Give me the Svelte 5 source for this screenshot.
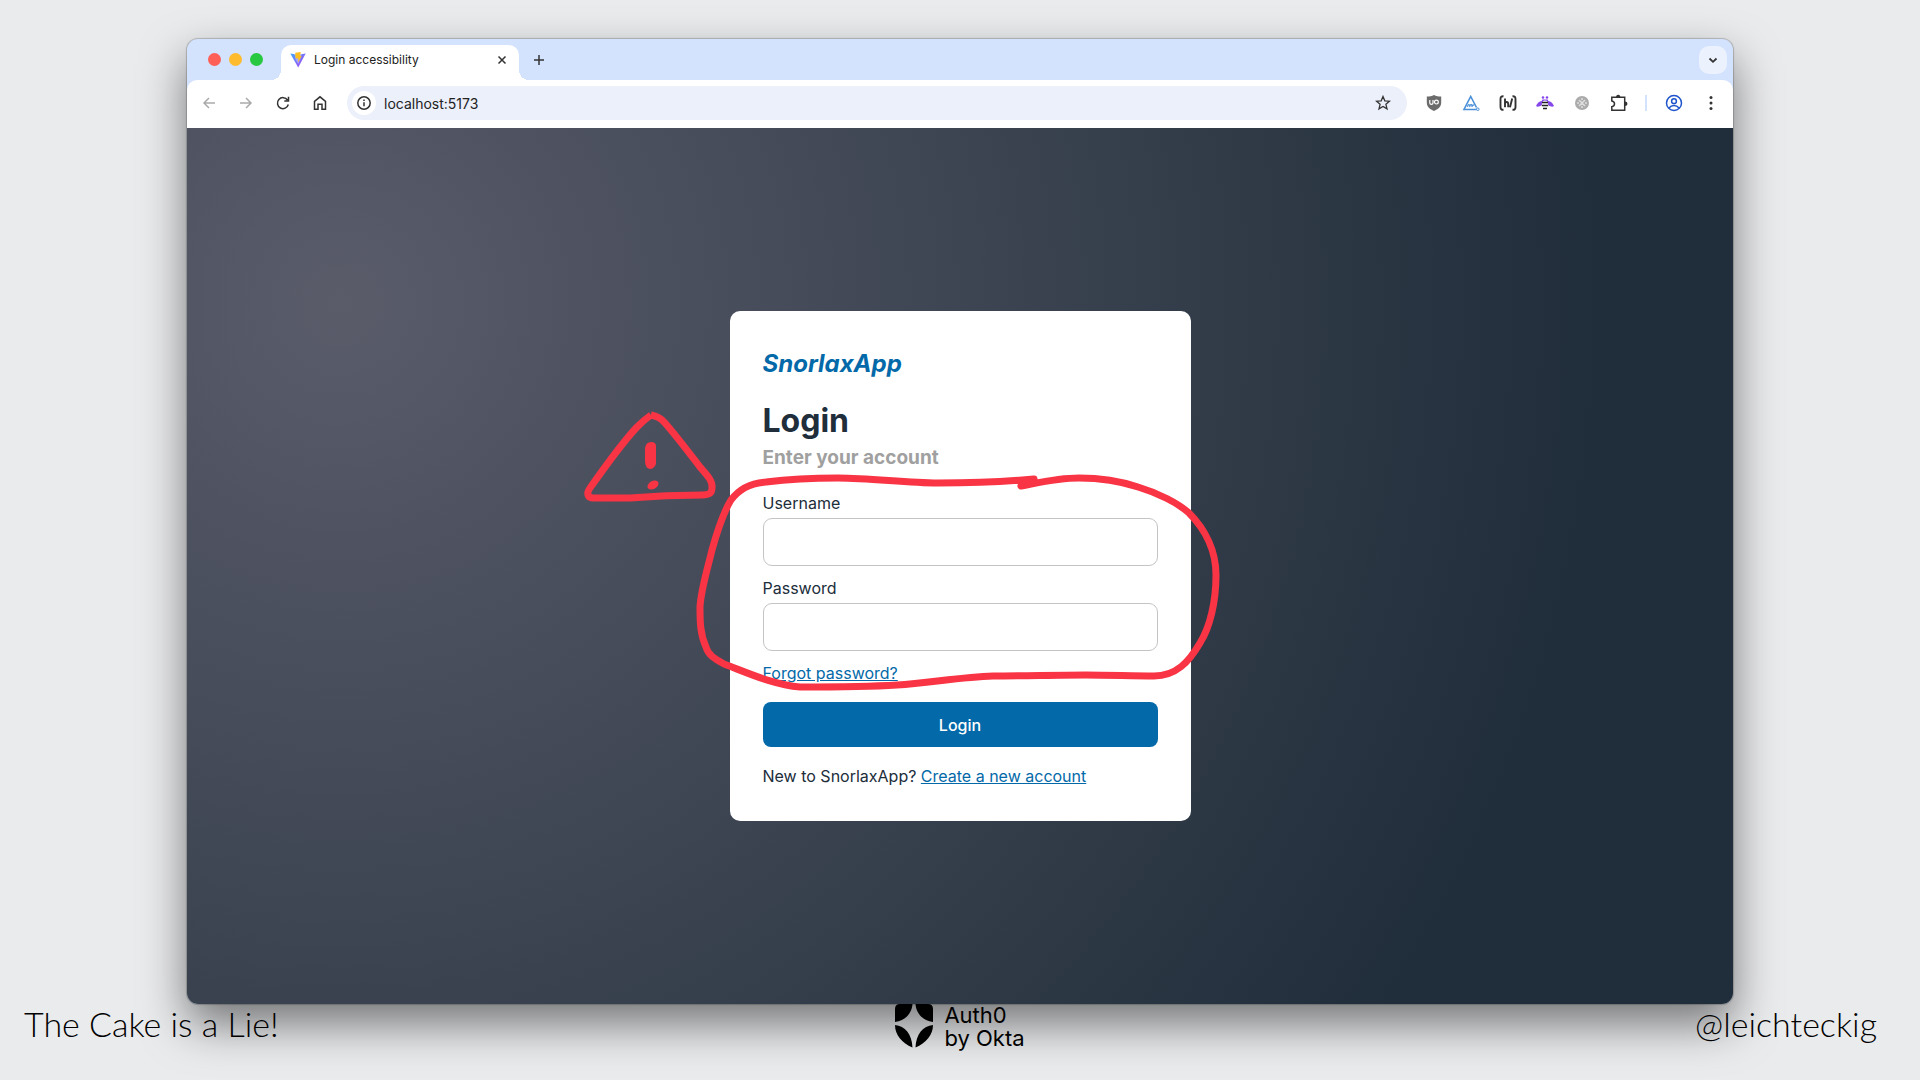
<script>
    let username = $state('');
    let password = $state('');
    const login = e => e.preventDefault();
</script>

<svelte:head>
    <title>Login accessibility</title>
</svelte:head>

<div class="slide">
    <main class="browser">
        <div class="tabs">
            <div class="lights">
                <span class="light red"></span>
                <span class="light yellow"></span>
                <span class="light green"></span>
            </div>
            <div class="tab">
                <svg class="favicon" viewBox="0 0 16 16" width="16" height="16" aria-hidden="true">
                    <defs>
                        <linearGradient id="bolt" x1="0" y1="0" x2="1" y2="1">
                            <stop offset="0" stop-color="#41a8ff" />
                            <stop offset="1" stop-color="#b03df5" />
                        </linearGradient>
                    </defs>
                    <path fill="url(#bolt)" d="M.3 1.400 8 2.800l7.700-1.400L8.200 15.500z" />
                    <path fill="#fff" d="m4.400 1.900 7.200-.6-1 5.200L8.200 12 5.800 8z" opacity=".35" />
                    <path fill="#fdbf22" d="m5.200.8 5.600-.8-.7 4 1.700-.2-3.700 6.700.2-4.200-2.700.3z" />
                </svg>
                <span class="title">Login accessibility</span>
                <button class="icon small" aria-label="Close tab">
                    <svg viewBox="0 0 10 10" width="10" height="10"><path d="m1.500 1.500 7 7m0-7-7 7" /></svg>
                </button>
            </div>
            <button class="icon small" aria-label="New tab">
                <svg viewBox="0 0 12 12" width="12" height="12"><path d="M6 1v10M1 6h10" /></svg>
            </button>
            <button class="icon search" aria-label="Search tabs">
                <svg viewBox="0 0 10 10" width="10" height="10"><path d="m1.500 3.500 3.500 3.300 3.500-3.300" stroke-width="1.800" /></svg>
            </button>
        </div>

        <div class="toolbar">
            <button class="icon faded" aria-label="Back">
                <svg viewBox="0 0 16 16" width="16" height="16"><path d="M14 8H3m5-5L3 8l5 5" /></svg>
            </button>
            <button class="icon faded" aria-label="Forward">
                <svg viewBox="0 0 16 16" width="16" height="16"><path d="M2 8h11M8 3l5 5-5 5" /></svg>
            </button>
            <button class="icon" aria-label="Reload">
                <svg viewBox="0 0 16 16" width="16" height="16"><path d="M13.300 9.500A5.500 5.500 0 1 1 12.500 5M13.500 1.800V6H9.300" /></svg>
            </button>
            <button class="icon" aria-label="Home">
                <svg viewBox="0 0 16 16" width="16" height="16"><path d="M2.500 14.300V6.400L8 1.800l5.500 4.600v7.900H10V9.200H6v5.100z" /></svg>
            </button>
            <div class="address">
                <span class="info">
                    <svg viewBox="0 0 16 16" width="16" height="16" aria-hidden="true"><circle cx="8" cy="8" r="6.200" /><path d="M8 7.300v4M8 4.500v1.400" /></svg>
                </span>
                <input aria-label="Address" value="localhost:5173" />
                <button class="icon" aria-label="Bookmark">
                    <svg viewBox="0 0 16 16" width="16" height="16"><path stroke-width="1.300" d="m8 1.500 1.800 4.300 4.700.4-3.600 3.100 1.100 4.600L8 11.500l-4 2.400 1.100-4.600-3.600-3.100 4.700-.4z" /></svg>
                </button>
            </div>
            <button class="icon" aria-label="uBlock">
                <svg viewBox="0 0 16 16" width="16" height="16">
                    <path fill="#6b6b6b" stroke="none" d="M8 0c2 1.200 4.500 1.600 7.200 1.600v6C15.200 12 12 14.500 8 16 4 14.500.8 12 .8 7.600v-6C3.500 1.600 6 1.200 8 0z" />
                    <path stroke="#fff" stroke-width="1.200" d="M3.800 5v3q0 1.300 1.600 1.300T7 8V5" /><circle cx="10.400" cy="7.100" r="1.900" stroke="#fff" stroke-width="1.200" />
                </svg>
            </button>
            <button class="icon" aria-label="Accessibility checker">
                <svg viewBox="0 0 18 16" width="18" height="16">
                    <path stroke="#4a90d9" stroke-width="1.600" d="M14.500 14.500H2L8.700 1.500l5.800 11" /><path stroke="#4a90d9" stroke-width="1.200" d="M5.500 11.800q.5-2.500 1.700-2t.5 2.200q.3-2.500 1.500-2.300t.6 2.200q.6-2.200 2.400-2" /><circle cx="15.800" cy="14.200" r="1.300" stroke="#4a90d9" stroke-width="1" />
                </svg>
            </button>
            <button class="icon" aria-label="Headings">
                <svg viewBox="0 0 18 16" width="18" height="16"><path stroke-width="1.900" d="M4.500 1.200Q1.500 1 1.500 4v8q0 3 3 2.800M13.500 1.200q3-.2 3 2.800v8q0 3-3 2.800M6 3.500v8.700M6 9q0-2 1.600-2T9.200 9v3.200M13.200 3.500 11 12.200" /></svg>
            </button>
            <button class="icon" aria-label="Bee">
                <svg viewBox="0 0 18 16" width="18" height="16">
                    <g stroke="none" fill="#8647ea">
                        <path d="M6.500 6Q2.500 6 .3 10.300q-.5 1.500 1.500 1.500 3-.2 5-2.500zM11.500 6q4 0 6.200 4.300.5 1.500-1.500 1.500-3-.2-5-2.500z" />
                        <path d="M6.300 4.600h5.400l.8 2.200h-7z" />
                        <circle cx="7" cy="2.500" r="1.300" /><circle cx="11" cy="2.500" r="1.300" />
                    </g>
                    <ellipse cx="9" cy="10" rx="3.200" ry="4.500" fill="#fff" stroke="none" />
                    <path stroke="#222" stroke-width="1.700" d="M6 7.500h6M5.800 10.500h6.400M7 13.500h4" />
                </svg>
            </button>
            <button class="icon" aria-label="Disabled extension">
                <svg viewBox="0 0 16 16" width="16" height="16"><circle cx="8" cy="8" r="7" fill="#ababab" stroke="none" /><path stroke="#dedede" d="m5 5 6 6m0-6-6 6M8 3v2M8 11v2M3 8h2M11 8h2" /></svg>
            </button>
            <button class="icon" aria-label="Extensions">
                <svg viewBox="0 0 18 18" width="18" height="18"><path d="M1.800 3.300h12.900v12.900H1.800v-3.500q2.700-.4 2.700-2.900T1.800 6.900z" /><path fill="#333" stroke="none" d="M6 3.500a2.200 2.700 0 0 1 4.400 0zM14.700 7.600a2.700 2.200 0 0 1 0 4.400z" /></svg>
            </button>
            <span class="separator"></span>
            <button class="icon profile" aria-label="Profile">
                <svg viewBox="0 0 18 18" width="18" height="18"><circle cx="9" cy="9" r="7.500" /><circle cx="9" cy="7.200" r="2.400" /><path d="M4 14q2-2.500 5-2.500t5 2.500" /></svg>
            </button>
            <button class="icon" aria-label="Menu">
                <svg viewBox="0 0 16 16" width="16" height="16"><g fill="#333" stroke="none"><circle cx="8" cy="2.500" r="1.500" /><circle cx="8" cy="8" r="1.500" /><circle cx="8" cy="13.500" r="1.500" /></g></svg>
            </button>
        </div>

        <div class="page">
            <form class="card" onsubmit={login}>
                <div class="brand">SnorlaxApp</div>
                <h1>Login</h1>
                <h2>Enter your account</h2>
                <label for="username">Username</label>
                <input id="username" type="text" bind:value={username} />
                <label for="password">Password</label>
                <input id="password" type="password" bind:value={password} />
                <a class="forgot" href="#forgot">Forgot password?</a>
                <button class="submit">Login</button>
                <p>New to SnorlaxApp? <a href="#create">Create a new account</a></p>

                <!-- marker drawing on top of the form -->
                <svg class="marker" viewBox="580 401 660 300" width="660" height="300" aria-hidden="true">
                    <path d="M1021 486 C1042 482 1058 478 1079 478 C1100 478 1120 481 1138 487 C1158 493 1178 503 1189 513 C1206 530 1216 552 1216 575 C1216 602 1210 627 1200 643 C1189 662 1176 676 1154 676 C1132 676 1110 675 1086 675 C1055 675 1024 676 993 676 C961 677 929 683 897 685 C865 687 832 687 800 687 C774 685 748 673 724 664 C715 659 708 655 706 647 C700 634 700 621 700 607 C701 589 708 567 712 550 C717 532 723 513 731 500 C739 489 751 483 766 482 C790 479 814 478 838 478 C872 478 905 483 938 483 C970 483 1003 482 1034 479z" />
                    <path d="M651 415 C657 416 661 418 665 423 C678 438 690 454 700 467 C707 475 713 481 712 488 C712 494 708 495 702 495 C678 495 654 496 630 498 L594 498 C586 498 587 492 590 488 C602 471 622 443 637 427 Q644 420 651 415" />
                    <path class="fill" d="M645 448 Q646 442 651 442 Q656 442 656 446 L656 464 Q654 469 650 469 Q645 468 645 461z" />
                    <ellipse class="fill" cx="653" cy="485" rx="6" ry="4" transform="rotate(-30 653 485)" />
                </svg>
            </form>
        </div>
    </main>

    <footer>
        <span class="hand">The Cake is a Lie!</span>
        <div class="logo">
            <svg viewBox="0 0 38 44" width="38" height="44" aria-hidden="true">
                <path d="M5 0h12.500C17 9 10 17 0 18V5q0-5 5-5zM33 0H20.500C21 9 28 17 38 18V5q0-5-5-5zM0 21c10 1 17 9 17.500 22.500C7 39 0 31 0 21zM38 21c-10 1-17 9-17.500 22.500C31 39 38 31 38 21z" />
            </svg>
            <span>Auth0<br />by Okta</span>
        </div>
        <span class="hand right">@leichteckig</span>
    </footer>
</div>

<style>
:global(body) {
    margin: 0;
    background: #eaebed;
}
.slide {
    --blue: #0369a8;
    --dark: #202d3a;
    --red: #f93444;
    display: flex;
    flex-direction: column;
    min-height: 100vh;
    box-sizing: border-box;
    padding-top: 39px;
    font-family: Inter, "Liberation Sans", sans-serif;
}
.browser {
    flex: 1;
    display: flex;
    flex-direction: column;
    margin: 0 187px;
    border-radius: 11px;
    background: #d3e2fd;
    box-shadow: 0 0 1px 1px rgba(0, 0, 0, 0.2), 0 20px 45px rgba(0, 0, 0, 0.5);
}
.tabs {
    display: flex;
    align-items: center;
    height: 41px;
    padding-right: 6px;
}
.lights {
    display: flex;
    gap: 8px;
    padding: 0 18px 0 21px;
}
.light {
    width: 13px;
    height: 13px;
    border-radius: 50%;
}
.red { background: #fe5f57; }
.yellow { background: #febb2e; }
.green { background: #28c840; }
.tab {
    display: flex;
    align-items: center;
    width: 238px;
    height: 35px;
    box-sizing: border-box;
    align-self: flex-end;
    padding: 0 7px 6px 9px;
    border-radius: 10px 10px 0 0;
    background: #fff;
    position: relative;
}
.tab::before, .tab::after {
    content: "";
    position: absolute;
    bottom: 0;
    width: 10px;
    height: 10px;
}
.tab::before {
    right: 100%;
    background: radial-gradient(circle at 0 0, transparent 10px, #fff 10px);
}
.tab::after {
    left: 100%;
    background: radial-gradient(circle at 100% 0, transparent 10px, #fff 10px);
}
.title {
    flex: 1;
    padding-left: 8px;
    font-size: 12px;
    color: #222;
}
.icon {
    display: flex;
    align-items: center;
    justify-content: center;
    width: 27px;
    height: 28px;
    padding: 0;
    border: none;
    background: transparent;
    flex: 0 0 auto;
}
.icon svg, .info svg {
    fill: none;
    stroke: #333;
    stroke-width: 1.5;
}
.small { width: 20px; }
.tab + .small { margin-left: 10px; }
.search {
    width: 28px;
    margin-left: auto;
    border-radius: 10px;
    background: #ecf2fd;
}
.faded svg { stroke: #aaa; }
.profile svg { stroke: #1f55cc; }
.toolbar {
    display: flex;
    align-items: center;
    gap: 10px;
    height: 48px;
    padding: 0 9px 2px 8px;
    border-radius: 10px 10px 0 0;
    background: #fff;
    box-sizing: border-box;
}
.address {
    flex: 1;
    display: flex;
    align-items: center;
    height: 34px;
    margin-left: 4px;
    margin-right: 3px;
    padding: 0 11px 0 5px;
    border-radius: 17px;
    background: #ecf0fa;
}
.info {
    display: flex;
    padding: 4px;
    border-radius: 50%;
    background: #fff;
}
.address input {
    flex: 1;
    padding: 0 8px;
    border: none;
    background: transparent;
    font-family: inherit;
    font-size: 14px;
    color: #222;
}
.separator {
    width: 2px;
    height: 16px;
    margin: 0 3px;
    background: #d3e2fd;
}
.page {
    flex: 1;
    display: flex;
    align-items: center;
    justify-content: center;
    border-radius: 0 0 11px 11px;
    background: radial-gradient(circle at 10% 20%, rgb(90, 92, 106) 0%, rgb(32, 45, 58) 81%);
}
.card {
    display: flex;
    flex-direction: column;
    position: relative;
    width: 461px;
    box-sizing: border-box;
    padding: 33px;
    border-radius: 10px;
    background: #fff;
    color: var(--dark);
    font-size: 16px;
    line-height: 24px;
}
.brand {
    font-size: 24px;
    line-height: 40px;
    font-weight: 700;
    font-style: italic;
    color: var(--blue);
}
h1 {
    margin: 17px 0 0;
    font-size: 32px;
    line-height: 40px;
}
h2 {
    margin: 5px 0 21px;
    font-size: 19px;
    line-height: 24px;
    font-weight: 700;
    color: #a0a0a0;
}
.card input {
    height: 48px;
    box-sizing: border-box;
    margin: 3px 0 10px;
    padding: 0 12px;
    border: 1px solid #c4c4c4;
    border-radius: 9px;
    font: inherit;
}
a {
    color: var(--blue);
}
.forgot {
    align-self: flex-start;
}
.submit {
    height: 45px;
    margin: 17px 0;
    border: none;
    border-radius: 8px;
    background: var(--blue);
    color: #fff;
    font: inherit;
    font-weight: 500;
}
p {
    margin: 0;
}
.marker {
    position: absolute;
    top: 90px;
    left: -150px;
    pointer-events: none;
    fill: none;
    stroke: var(--red);
    stroke-width: 7;
    stroke-linejoin: round;
}
.marker .fill {
    fill: var(--red);
    stroke: none;
}
footer {
    display: grid;
    grid-template-columns: 1fr auto 1fr;
    height: 76px;
    position: relative;
    color: #000;
}
.logo {
    display: flex;
    gap: 11px;
    font-size: 22px;
    line-height: 23px;
}
.hand {
    padding-left: 24px;
    font-family: Lato, sans-serif;
    font-size: 34px;
    line-height: 40px;
    font-weight: 300;
}
.right {
    padding-right: 43px;
    text-align: right;
}
</style>
